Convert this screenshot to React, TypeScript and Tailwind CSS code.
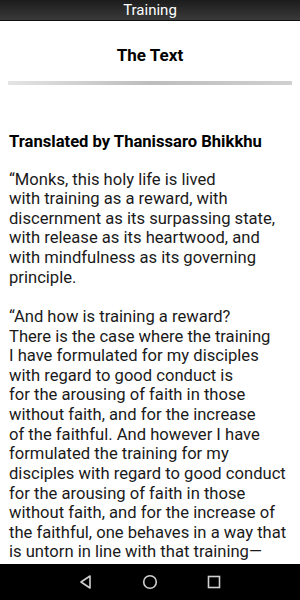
import React from "react";

const lines1 = [
  "“Monks, this holy life is lived",
  "with training as a reward, with",
  "discernment as its surpassing state,",
  "with release as its heartwood, and",
  "with mindfulness as its governing",
  "principle.",
];
const lines2 = [
  "“And how is training a reward?",
  "There is the case where the training",
  "I have formulated for my disciples",
  "with regard to good conduct is",
  "for the arousing of faith in those",
  "without faith, and for the increase",
  "of the faithful. And however I have",
  "formulated the training for my",
  "disciples with regard to good conduct",
  "for the arousing of faith in those",
  "without faith, and for the increase of",
  "the faithful, one behaves in a way that",
  "is untorn in line with that training—",
];

export default function App() {
  return (
    <div className="w-[300px] h-[600px] flex flex-col bg-white overflow-hidden" style={{ fontFamily: "Roboto, 'Liberation Sans', sans-serif" }}>
      <div className="h-[21px] shrink-0 bg-gradient-to-b from-[#1c1c1c] to-[#3a3a3a] border-b border-[#111] flex items-center justify-center text-white text-[15px] leading-none">
        Training
      </div>
      <div className="flex-1 overflow-hidden">
        <div className="pt-[24px] h-[44px] flex justify-center leading-[20px]">
          <span className="font-bold text-[17px] text-black">The Text</span>
        </div>
        <div className="mx-[8px] mt-[16px] h-[4px] bg-gradient-to-r from-[#e4e4e4] via-[#bdbdbd] to-[#d0d0d0]" />
        <div className="px-[9px] pt-[46.5px] text-[16.6px] text-[#1a1a1a] whitespace-nowrap">
          <div className="font-bold text-black leading-[19px]">Translated by Thanissaro Bhikkhu</div>
          <div className="mt-[19px] leading-[19.63px]">
            {lines1.map((l, i) => (
              <div key={i}>{l}</div>
            ))}
            <div className="h-[19.63px]" />
            {lines2.map((l, i) => (
              <div key={i}>{l}</div>
            ))}
          </div>
        </div>
      </div>
      <div className="h-[36px] shrink-0 bg-black flex items-center justify-center gap-[46px]">
        <svg width="18" height="18" viewBox="0 0 18 18" fill="none" stroke="#d0d0d0" strokeWidth="1.6" strokeLinejoin="round">
          <path d="M13 3 L4 9 L13 15 Z" />
        </svg>
        <svg width="18" height="18" viewBox="0 0 18 18" fill="none" stroke="#d0d0d0" strokeWidth="1.6">
          <circle cx="9" cy="9" r="6.3" />
        </svg>
        <svg width="18" height="18" viewBox="0 0 18 18" fill="none" stroke="#d0d0d0" strokeWidth="1.6">
          <rect x="3.5" y="3.5" width="11" height="11" />
        </svg>
      </div>
    </div>
  );
}
